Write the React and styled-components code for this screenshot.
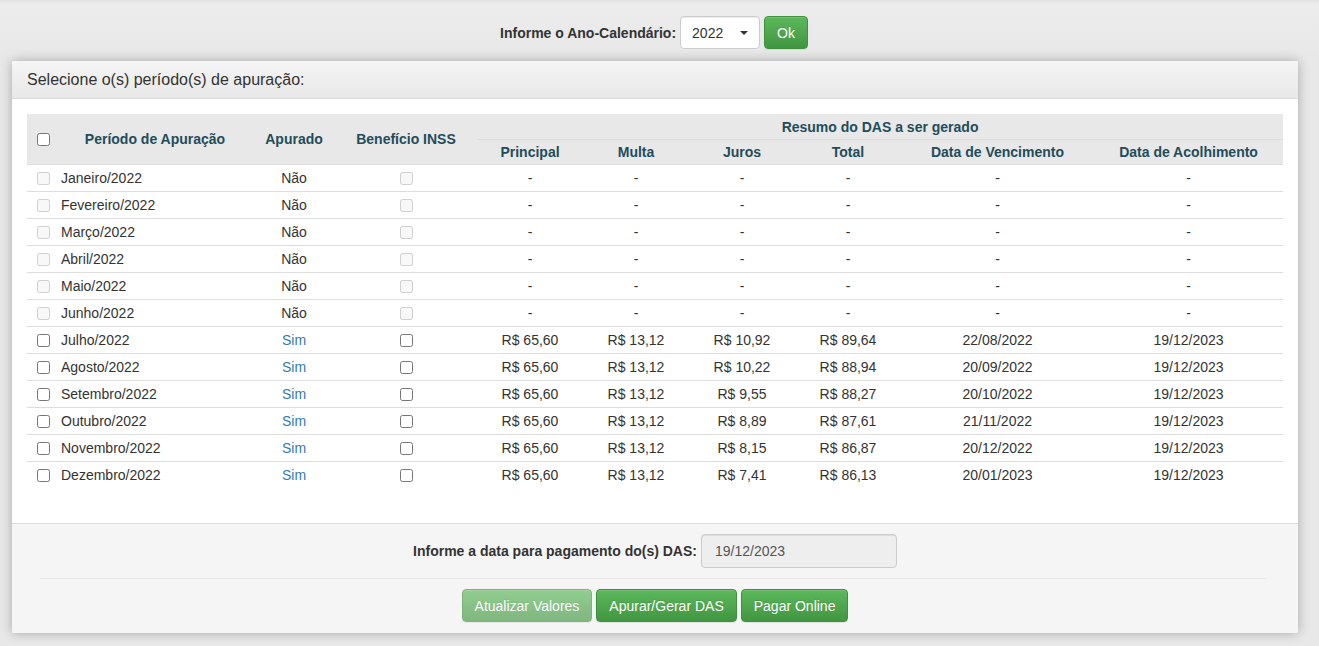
import React from 'react';
import styled, { createGlobalStyle } from 'styled-components';

const GlobalStyle = createGlobalStyle`
  html, body {
    margin: 0;
    padding: 0;
    background: #e8e8e8;
    font-family: "Liberation Sans", Arial, sans-serif;
    font-size: 14px;
    color: #333333;
  }
`;

const Page = styled.div`
  padding: 16px 21px 13px 12px;
  min-height: 646px;
  box-sizing: border-box;
  background: linear-gradient(#e2e2e2 0, #ececec 4px, #e8e8e8 60px);
`;

const YearBar = styled.form`
  display: flex;
  justify-content: center;
  align-items: center;
  gap: 4px;
  margin: 0 0 12px 0;
  padding-right: 2px;
`;

const Label = styled.label`
  font-weight: bold;
  font-size: 14px;
  color: #333;
`;

const SelectBox = styled.div`
  position: relative;
  width: 80px;
  height: 33px;
  box-sizing: border-box;
  border: 1px solid #cccccc;
  border-radius: 4px;
  background: #ffffff;
  display: flex;
  align-items: center;
  padding-left: 11px;
  color: #333;
  font-size: 14px;
  box-shadow: inset 0 1px 1px rgba(0,0,0,.075);
`;

const Caret = styled.span`
  position: absolute;
  right: 11px;
  top: 14px;
  width: 0;
  height: 0;
  border-left: 4px solid transparent;
  border-right: 4px solid transparent;
  border-top: 4px solid #333;
`;

const Button = styled.button`
  height: 33px;
  padding: 0 12px;
  font-family: "Liberation Sans", Arial, sans-serif;
  font-size: 14px;
  color: #ffffff;
  border: 1px solid #3e8f3e;
  border-radius: 4px;
  background: linear-gradient(#5cb85c 0%, #419641 100%);
  box-shadow: inset 0 1px 0 rgba(255,255,255,.15), 0 1px 1px rgba(0,0,0,.075);
  opacity: ${p => (p.disabled ? 0.65 : 1)};
  cursor: pointer;
  text-shadow: 0 -1px 0 rgba(0,0,0,.1);
`;

const Panel = styled.div`
  background: #ffffff;
  border-radius: 2px;
  box-shadow: 0 0 12px rgba(0,0,0,.28);
  overflow: hidden;
`;

const PanelHeading = styled.div`
  height: 38px;
  box-sizing: border-box;
  padding: 0 15px;
  display: flex;
  align-items: center;
  font-size: 16px;
  color: #333;
  background: linear-gradient(#f5f5f5 0%, #e8e8e8 100%);
  border-bottom: 1px solid #dddddd;
`;

const PanelBody = styled.div`
  padding: 15px 15px 35px 15px;
`;

const Table = styled.table`
  width: 100%;
  border-collapse: collapse;
  table-layout: fixed;
  font-size: 14px;
`;

const Th = styled.th`
  background: #e8e8e8;
  color: #1f4d5c;
  font-weight: bold;
  font-size: 14px;
  text-align: center;
  vertical-align: middle;
  height: ${p => (p.$divider ? '24px' : '25px')};
  padding: 0 4px;
  border-top: ${p => (p.$divider ? '1px solid #dcdcdc' : 'none')};
`;

const Td = styled.td`
  height: 26px;
  padding: 0 4px;
  text-align: ${p => p.$align || 'center'};
  color: ${p => (p.$link ? '#337ab7' : '#333333')};
  vertical-align: middle;
  white-space: nowrap;
  border-top: 1px solid #dddddd;
`;

const Check = styled.input.attrs({ type: 'checkbox' })`
  width: 13px;
  height: 13px;
  margin: 0;
  vertical-align: middle;
`;

const CheckCell = styled.div`
  display: flex;
  justify-content: ${p => (p.$left ? 'flex-start' : 'center')};
  padding-left: ${p => (p.$left ? '6px' : '0')};
`;

const PanelFooter = styled.div`
  background: #f5f5f5;
  border-top: 1px solid #dddddd;
  padding: 10px 0 11px;
`;

const DateRow = styled.div`
  display: flex;
  justify-content: center;
  align-items: center;
  gap: 4px;
`;

const DateInput = styled.input`
  width: 196px;
  height: 34px;
  box-sizing: border-box;
  padding: 6px 13px;
  border: 1px solid #cccccc;
  border-radius: 4px;
  background: #eeeeee;
  color: #555555;
  font-family: "Liberation Sans", Arial, sans-serif;
  font-size: 14px;
  box-shadow: inset 0 1px 1px rgba(0,0,0,.075);
`;

const Divider = styled.hr`
  margin: 10px 31px 10px 28px;
  border: 0;
  border-top: 1px solid #e8e8e8;
`;

const Actions = styled.div`
  display: flex;
  justify-content: center;
  gap: 4px;
`;

const DISABLED = ['Janeiro', 'Fevereiro', 'Março', 'Abril', 'Maio', 'Junho'];
const ACTIVE = [
  ['Julho', '10,92', '89,64', '22/08/2022'],
  ['Agosto', '10,22', '88,94', '20/09/2022'],
  ['Setembro', '9,55', '88,27', '20/10/2022'],
  ['Outubro', '8,89', '87,61', '21/11/2022'],
  ['Novembro', '8,15', '86,87', '20/12/2022'],
  ['Dezembro', '7,41', '86,13', '20/01/2023'],
];

const widths = [30, 196, 82, 142, 106, 106, 106, 106, 193, 189];

const App = () => (
  <Page>
    <GlobalStyle />
    <YearBar>
      <Label>Informe o Ano-Calendário:</Label>
      <SelectBox>
        2022
        <Caret />
      </SelectBox>
      <Button type="button">Ok</Button>
    </YearBar>

    <Panel>
      <PanelHeading>Selecione o(s) período(s) de apuração:</PanelHeading>
      <PanelBody>
        <Table>
          <colgroup>
            {widths.map((w, i) => (
              <col key={i} style={{ width: w }} />
            ))}
          </colgroup>
          <thead>
            <tr>
              <Th rowSpan={2}>
                <CheckCell $left><Check /></CheckCell>
              </Th>
              <Th rowSpan={2}>Período de Apuração</Th>
              <Th rowSpan={2}>Apurado</Th>
              <Th rowSpan={2}>Benefício INSS</Th>
              <Th colSpan={6}>Resumo do DAS a ser gerado</Th>
            </tr>
            <tr>
              <Th $divider>Principal</Th>
              <Th $divider>Multa</Th>
              <Th $divider>Juros</Th>
              <Th $divider>Total</Th>
              <Th $divider>Data de Vencimento</Th>
              <Th $divider>Data de Acolhimento</Th>
            </tr>
          </thead>
          <tbody>
            {DISABLED.map(m => (
              <tr key={m}>
                <Td><CheckCell $left><Check disabled /></CheckCell></Td>
                <Td $align="left">{m}/2022</Td>
                <Td>Não</Td>
                <Td><CheckCell><Check disabled /></CheckCell></Td>
                <Td>-</Td>
                <Td>-</Td>
                <Td>-</Td>
                <Td>-</Td>
                <Td>-</Td>
                <Td>-</Td>
              </tr>
            ))}
            {ACTIVE.map(([m, juros, total, venc]) => (
              <tr key={m}>
                <Td><CheckCell $left><Check /></CheckCell></Td>
                <Td $align="left">{m}/2022</Td>
                <Td $link>Sim</Td>
                <Td><CheckCell><Check /></CheckCell></Td>
                <Td>R$ 65,60</Td>
                <Td>R$ 13,12</Td>
                <Td>R$ {juros}</Td>
                <Td>R$ {total}</Td>
                <Td>{venc}</Td>
                <Td>19/12/2023</Td>
              </tr>
            ))}
          </tbody>
        </Table>
      </PanelBody>
      <PanelFooter>
        <DateRow>
          <Label>Informe a data para pagamento do(s) DAS:</Label>
          <DateInput readOnly value="19/12/2023" />
        </DateRow>
        <Divider />
        <Actions>
          <Button type="button" disabled>Atualizar Valores</Button>
          <Button type="button">Apurar/Gerar DAS</Button>
          <Button type="button">Pagar Online</Button>
        </Actions>
      </PanelFooter>
    </Panel>
  </Page>
);

export default App;
